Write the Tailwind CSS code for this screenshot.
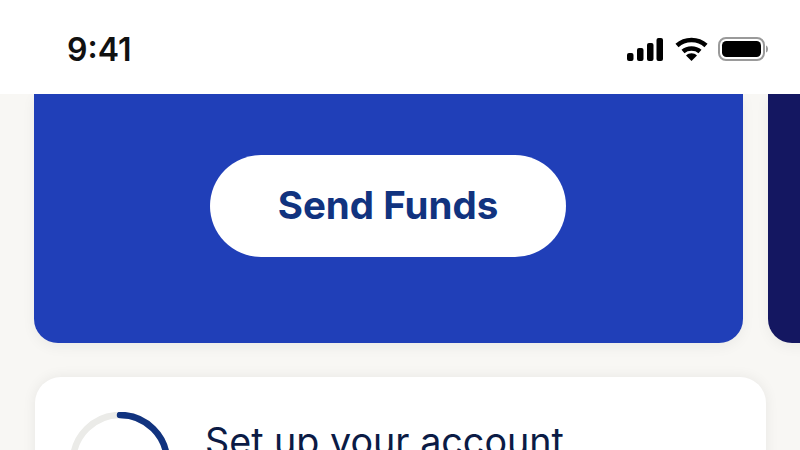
<!DOCTYPE html>
<html>
  <head>
    <title>Send Funds</title>
    <script src="https://cdn.jsdelivr.net/npm/@tailwindcss/browser@4"></script>
  </head>
  <body>
    <div class="flex h-[450px] w-[800px] flex-col overflow-hidden bg-[#f8f7f4]" style='font-family: "Inter", "Liberation Sans", sans-serif;'>
      <!-- Status bar -->
      <header class="relative z-10 flex h-[94px] shrink-0 items-center justify-between bg-white pl-[67px] pr-[32px] pt-[4px]">
        <span class="mt-[2px] text-[32px] font-semibold leading-none text-[#111111]">9:41</span>
        <div class="flex items-center">
          <svg class="mr-[12px]" width="36" height="23" viewBox="0 0 36 23" fill="#000">
            <rect x="0" y="15" width="6.500" height="8" rx="2"></rect>
            <rect x="10" y="10" width="6.500" height="13" rx="2"></rect>
            <rect x="20" y="5" width="6.500" height="18" rx="2"></rect>
            <rect x="29.500" y="0" width="6.500" height="23" rx="2"></rect>
          </svg>
          <svg class="mr-[10px]" width="33" height="24" viewBox="0 0 33 24" fill="none" stroke="#000" stroke-width="4.500">
            <path d="M2 8.500C10 1 23 1 31 8.500"></path>
            <path d="M8 14.500C12.500 10.500 20.500 10.500 25 14.500"></path>
            <path d="M16.500 24L11 18.500C14 15.500 19 15.500 22 18.500Z" fill="#000" stroke="none"></path>
          </svg>
          <svg width="50" height="24" viewBox="0 0 50 24" fill="none">
            <rect x="1" y="1" width="45" height="22" rx="7" stroke="#9a9a9a" stroke-width="2"></rect>
            <rect x="4" y="4" width="39" height="16" rx="4.500" fill="#000"></rect>
            <path d="M48 8.500C49.500 9 50 10.500 50 12C50 13.500 49.500 15 48 15.500Z" fill="#9a9a9a"></path>
          </svg>
        </div>
      </header>

      <!-- Carousel -->
      <div class="flex h-[249px] shrink-0 gap-[25px] pl-[34px]">
        <div class="flex h-full w-[709px] shrink-0 items-start justify-center rounded-b-[24px] bg-[#203fb8] pt-[61px] shadow-[0_4px_14px_rgba(0,0,0,0.05)]">
          <button class="ml-[-1px] flex h-[102px] w-[356px] items-center justify-center rounded-full bg-white text-[38.500px] font-bold text-[#11337f]">Send Funds</button>
        </div>
        <div class="h-full w-[60px] shrink-0 rounded-bl-[24px] bg-[#141761] shadow-[0_4px_14px_rgba(0,0,0,0.05)]"></div>
      </div>

      <!-- Setup card -->
      <div class="ml-[35px] mt-[34px] flex h-[200px] w-[731px] shrink-0 gap-[35px] rounded-[26px] bg-white pl-[35px] pt-[35px] shadow-[0_0_14px_rgba(0,0,0,0.07)]">
        <svg class="shrink-0" width="100" height="100" viewBox="0 0 100 100" fill="none" stroke-width="6.500">
          <circle cx="50" cy="50" r="47" stroke="#ebebe8"></circle>
          <path d="M50 3A47 47 0 0 1 97 50" stroke="#11337f" stroke-linecap="round"></path>
        </svg>
        <span class="mt-[7px] whitespace-nowrap text-[37.700px] leading-[44px] text-[#0b1b45]">Set up your account</span>
      </div>
    </div>
  </body>
</html>
